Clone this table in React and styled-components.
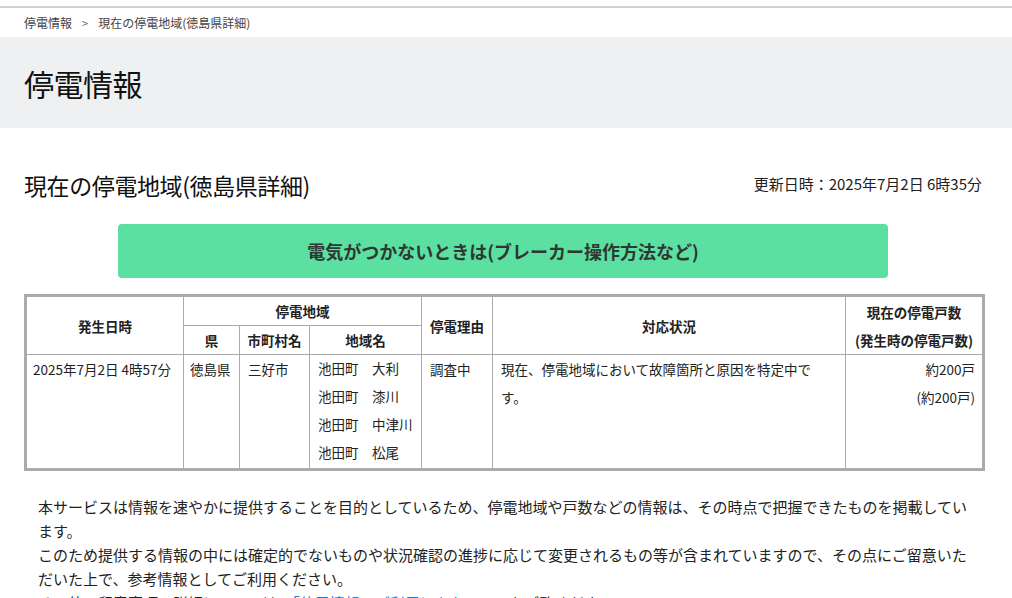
import styled, { createGlobalStyle } from "styled-components";

const GlobalStyle = createGlobalStyle`
  html, body {
    margin: 0;
    padding: 0;
    background: #fff;
    color: #222;
    font-family: "Noto Sans CJK JP", "Noto Sans", sans-serif;
  }
`

const TopLine = styled.div`
  height: 6px;
  border-bottom: 2px solid #cfcfcf;
`

const Breadcrumb = styled.nav`
  display: flex;
  align-items: center;
  gap: 10px;
  height: 29px;
  padding: 0 24px;
  font-size: 12px;
  color: #444;
  & > span.sep{
    font-size: 11px;
    color: #666;
  }
`

const TitleBand = styled.div`
  background: #eef0f2;
  height: 91px;
  display: flex;
  align-items: center;
  padding: 0 24px;
`

const PageTitle = styled.h1`
  margin: 0;
  font-size: 30px;
  font-weight: 400;
  color: #111;
  letter-spacing: -0.5px;
`

const Main = styled.main`
  width: 958px;
  margin-left: 24px;
  padding-top: 40px;
`

const SectionHead = styled.div`
  display: flex;
  justify-content: space-between;
  align-items: center;
  height: 34px;
`

const SectionTitle = styled.h2`
  margin: 0;
  font-size: 23px;
  font-weight: 400;
  color: #111;
  letter-spacing: -0.4px;
`

const Updated = styled.p`
  margin: 0 0 4px 0;
  font-size: 15px;
  color: #222;
`

const GuideButton = styled.a`
  display: flex;
  align-items: center;
  justify-content: center;
  width: 770px;
  height: 54px;
  margin: 22px auto 16px;
  background: #5ce0a1;
  border-radius: 4px;
  font-size: 18px;
  font-weight: bold;
  color: #2f3733;
  text-decoration: none;
  cursor: pointer;
`

const Table = styled.table`
  width: 100%;
  table-layout: fixed;
  border-collapse: collapse;
  border: 3px solid #ababab;
  font-size: 13.5px;
  color: #222;
  & th, & td{
    border: 1px solid #ababab;
    padding: 0 6px;
    line-height: 28px;
    vertical-align: top;
  }
  & th{
    font-weight: bold;
    text-align: center;
    vertical-align: middle;
    white-space: nowrap;
  }
`

const Cell = styled.td`
  text-align: ${p => p.$align || "left"};
  white-space: ${p => p.$nowrap ? "nowrap" : "normal"};
  padding: ${p => p.$pad || "0 8px"} !important;
  & > div:first-child, &{
    line-height: 27px;
  }
`

const Notes = styled.div`
  width: 936px;
  margin: 24px 0 0 14px;
  font-size: 15px;
  line-height: 24px;
  color: #222;
  & p{
    margin: 0;
  }
  & a{
    color: #1f7fd0;
    text-decoration: none;
  }
`

const areas = ["池田町　大利", "池田町　漆川", "池田町　中津川", "池田町　松尾"]

function App() {
  return (
    <>
      <GlobalStyle />
      <TopLine />
      <Breadcrumb>
        <span>停電情報</span>
        <span className="sep">&gt;</span>
        <span>現在の停電地域(徳島県詳細)</span>
      </Breadcrumb>
      <TitleBand>
        <PageTitle>停電情報</PageTitle>
      </TitleBand>
      <Main>
        <SectionHead>
          <SectionTitle>現在の停電地域(徳島県詳細)</SectionTitle>
          <Updated>更新日時：2025年7月2日 6時35分</Updated>
        </SectionHead>
        <GuideButton>電気がつかないときは(ブレーカー操作方法など)</GuideButton>
        <Table>
          <colgroup>
            <col style={{ width: 158 }} />
            <col style={{ width: 56 }} />
            <col style={{ width: 70 }} />
            <col style={{ width: 112 }} />
            <col style={{ width: 71 }} />
            <col style={{ width: 353 }} />
            <col style={{ width: 138 }} />
          </colgroup>
          <thead>
            <tr>
              <th rowSpan={2}>発生日時</th>
              <th colSpan={3}>停電地域</th>
              <th rowSpan={2}>停電理由</th>
              <th rowSpan={2}>対応状況</th>
              <th rowSpan={2}>現在の停電戸数<br />(発生時の停電戸数)</th>
            </tr>
            <tr>
              <th>県</th>
              <th>市町村名</th>
              <th>地域名</th>
            </tr>
          </thead>
          <tbody>
            <tr>
              <Cell $nowrap $pad="0 6px">2025年7月2日 4時57分</Cell>
              <Cell $nowrap $pad="0 6px">徳島県</Cell>
              <Cell $nowrap>三好市</Cell>
              <Cell $nowrap $pad="0 8px 2px">
                {areas.map(a => <div key={a}>{a}</div>)}
              </Cell>
              <Cell $nowrap>調査中</Cell>
              <Cell $pad="0 26px 0 8px">現在、停電地域において故障箇所と原因を特定中です。</Cell>
              <Cell $align="right" $pad="0 7px">約200戸<br />(約200戸)</Cell>
            </tr>
          </tbody>
        </Table>
        <Notes>
          <p>本サービスは情報を速やかに提供することを目的としているため、停電地域や戸数などの情報は、その時点で把握できたものを掲載しています。</p>
          <p>このため提供する情報の中には確定的でないものや状況確認の進捗に応じて変更されるもの等が含まれていますので、その点にご留意いただいた上で、参考情報としてご利用ください。</p>
          <p>その他、留意事項の詳細については、<a>「停電情報のご利用にあたって」</a>をご覧ください。</p>
        </Notes>
      </Main>
    </>
  )
}
export default App;
